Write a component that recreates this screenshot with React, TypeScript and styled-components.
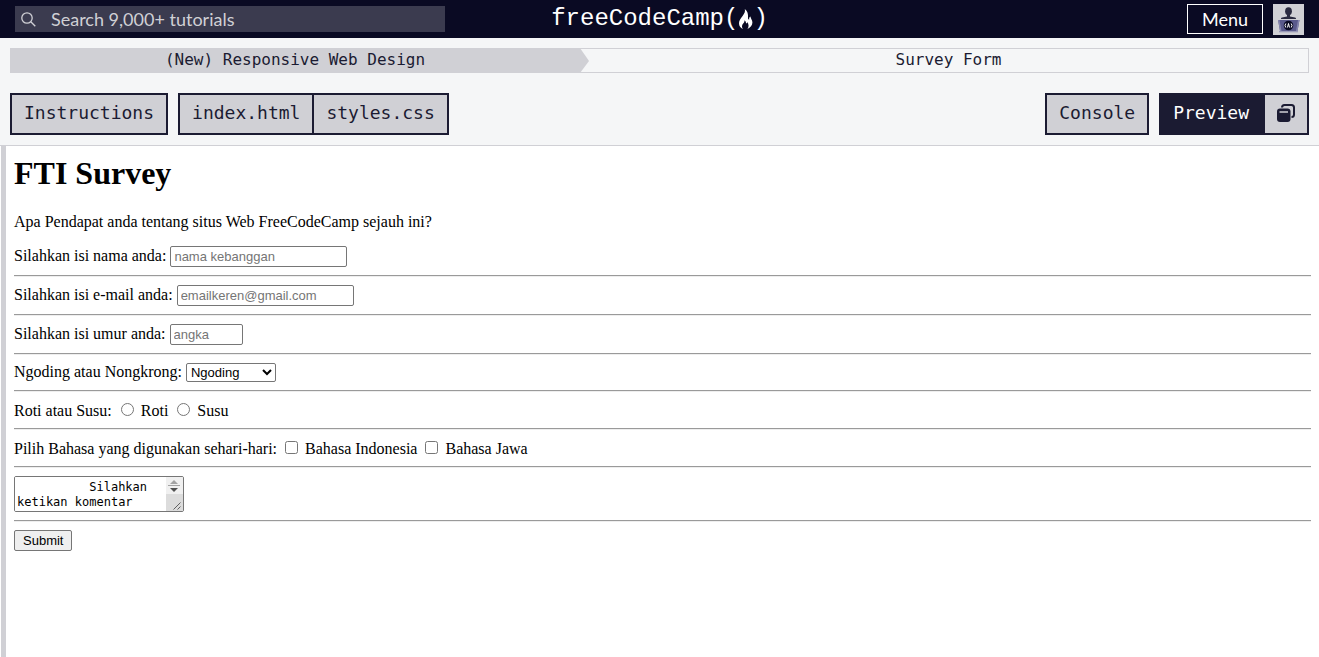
import React from 'react';
import styled, { createGlobalStyle } from 'styled-components';

const mono = "'DejaVu Sans Mono', monospace";
const sans = "Lato, sans-serif";
const arial = "'Liberation Sans', Arial, sans-serif";
const serif = "'Liberation Serif', 'Times New Roman', serif";

const GlobalStyle = createGlobalStyle`
  *, *::before, *::after { box-sizing: border-box; }
  html, body, #root { height: 100%; }
  body { margin: 0; background: #fff; }
`;

const Page = styled.div`
  min-height: 100%;
  display: flex;
  flex-direction: column;
`;

const Header = styled.header`
  display: grid;
  grid-template-columns: 1fr auto 1fr;
  align-items: center;
  height: 38px;
  padding: 0 15px;
  background: #0a0a23;
`;

const SearchBox = styled.label`
  display: flex;
  align-items: center;
  gap: 15px;
  width: 100%;
  max-width: 430px;
  height: 26px;
  padding: 0 6px;
  background: #3b3b4f;
  color: #d0d0d5;
`;

const SearchInput = styled.input`
  flex: 1;
  min-width: 0;
  padding: 0;
  border: 0;
  outline: 0;
  background: transparent;
  color: #d0d0d5;
  font: 18px/24px ${sans};
  &::placeholder { color: #d0d0d5; opacity: 1; }
`;

const Logo = styled.a`
  display: flex;
  align-items: center;
  color: #fff;
  font: 24px/34px 'Liberation Mono', monospace;
  text-decoration: none;
`;

const HeaderActions = styled.div`
  display: flex;
  align-items: center;
  justify-content: flex-end;
  gap: 10px;
`;

const MenuButton = styled.button`
  height: 30px;
  padding: 0 14px;
  border: 1px solid #fff;
  background: #0a0a23;
  color: #fff;
  font: 18px/24px ${sans};
`;

const AvatarLink = styled.a`
  display: block;
  width: 31px;
  height: 31px;
  background: #d0d0d5;
`;

const Toolbar = styled.div`
  padding: 10px;
  border-bottom: 1px solid #d0d0d5;
  background: #f5f6f7;
`;

const Breadcrumb = styled.nav`
  display: grid;
  grid-template-columns: 19fr 9px 24fr;
  height: 25px;
  margin-bottom: 20px;
  font: 16px/23px ${mono};
  text-align: center;
`;

const Crumb = styled.a<{ $filled?: boolean }>`
  color: #1b1b32;
  text-decoration: none;
  background: ${(p) => (p.$filled ? '#d0d0d5' : 'transparent')};
  border: 1px solid #d0d0d5;
  border-width: ${(p) => (p.$filled ? '0' : '1px 1px 1px 0')};
  line-height: ${(p) => (p.$filled ? '23px' : '21px')};
`;

const CrumbArrow = styled.svg`
  display: block;
  width: 9px;
  height: 25px;
`;

const TabBar = styled.div`
  display: flex;
  justify-content: space-between;
`;

const TabSide = styled.div`
  display: flex;
  gap: 10px;
`;

const TabGroup = styled.div`
  display: flex;
`;

const Tab = styled.button<{ $active?: boolean; $icon?: boolean; $joined?: boolean }>`
  display: flex;
  align-items: center;
  justify-content: center;
  height: 42px;
  margin: 0;
  padding: ${(p) => (p.$icon ? '0 11px 2px' : '0 12px 3px')};
  border: 2px solid #1b1b32;
  border-left-width: ${(p) => (p.$joined ? '0' : '2px')};
  background: ${(p) => (p.$active ? '#1b1b32' : '#d0d0d5')};
  color: ${(p) => (p.$active ? '#fff' : '#1b1b32')};
  font: 18px/24px ${mono};
`;

const Preview = styled.main`
  flex: 1;
  margin-left: 1px;
  padding: 9px 8px 8px;
  border-left: 5px solid #d0d0d5;
  background: #fff;
  color: #000;
  font: 16px/18px ${serif};
`;

const Title = styled.h1`
  margin: 0 0 21px;
  font-size: 32px;
  line-height: 37px;
`;

const Intro = styled.p`
  margin: 0 0 15px;
`;

const Row = styled.div``;

const Rule = styled.hr`
  height: 2px;
  margin: 8px 0;
  border: solid;
  border-width: 1px 0;
  border-color: #9a9a9a #eee #eee #9a9a9a;
`;

const Field = styled.input<{ $short?: boolean }>`
  width: ${(p) => (p.$short ? '73px' : '177px')};
  height: 21px;
  padding: 1px 3px;
  border: 1px solid #767676;
  border-radius: 2px;
  background: #fff;
  font: 13px/15px ${arial};
  &::placeholder { color: #757575; opacity: 1; }
`;

const Choice = styled.select`
  width: 90px;
  height: 19px;
  padding: 0;
  border: 1px solid #767676;
  border-radius: 2px;
  background: #fff;
  color: #000;
  font: 13px/15px ${arial};
`;

const Tick = styled.input`
  width: 13px;
  height: 13px;
`;

const CommentBox = styled.div`
  display: flex;
  width: 170px;
  height: 36px;
  border: 1px solid #767676;
  border-radius: 2px;
  overflow: hidden;
`;

const Comment = styled.textarea`
  flex: 1;
  min-width: 0;
  padding: 3px 2px 1px;
  border: 0;
  outline: 0;
  resize: none;
  overflow: hidden;
  color: #000;
  font: 12px/15px ${mono};
`;

const ScrollTrack = styled.svg`
  flex: none;
  width: 17px;
  height: 34px;
`;

const Submit = styled.button`
  display: block;
  height: 21px;
  padding: 0 8px;
  border: 1px solid #767676;
  border-radius: 2px;
  background: #efefef;
  color: #000;
  font: 13px/15px ${arial};
`;

const SearchIcon = () => (
  <svg width="15" height="15" viewBox="0 0 15 15" fill="none" stroke="currentColor" strokeWidth="1.3" aria-hidden="true">
    <circle cx="6" cy="6" r="5.200" />
    <path d="M9.800 9.800 14.300 14.300" />
  </svg>
);

const Flame = () => (
  <svg width="15" height="22" viewBox="0 0 15 22" aria-hidden="true">
    <path
      fill="#fff"
      d="M6.800 1C7.400 3.600 6.600 5.300 4.600 7.900C2.800 10.200 1 12.200 1 15.200C1 17.900 2.500 19.900 4.900 21C3.600 19 3.700 17.200 5.200 15.500C6.300 14.300 6.600 13.400 6.400 12.200C7.700 12.900 8.200 14.200 8 15.600C8.800 15.400 9.200 14.700 9.200 14C10.900 16.300 11.100 19 9.400 21C12.400 19.800 14.400 17.500 14.400 14.600C14.400 12.200 12.800 10.900 12.400 8.600C11.300 9.400 11 10.300 11.200 11.600C10.300 11.600 9.900 10.900 10 9.800C10.300 6.300 9.600 3 6.800 1Z"
    />
  </svg>
);

const AvatarIcon = () => (
  <svg width="31" height="31" viewBox="0 0 31 31" aria-hidden="true">
    <ellipse cx="15.500" cy="7.200" rx="3.400" ry="4" fill="#2a2a40" />
    <path fill="#2a2a40" d="M14 10h3v2.500l5 1c.9.300 1 .8 1 1.500H8c0-.7.1-1.200 1-1.500l5-1Z" />
    <path fill="#5a5a8c" d="M5 16h21.500l-2 11H7Z" />
    <path fill="#8686ae" d="M5 16h1.500l2 11H7Zm21.500 0H25l-2 11h1.500ZM6 27.300h19v1H6Z" />
    <circle cx="15.500" cy="21.500" r="4.800" fill="#0a0a23" />
    <path fill="none" stroke="#fff" strokeWidth="1" d="M12.800 19.500q-1.600 2 0 4m5.400-4q1.600 2 0 4m-3.700 0 1-4 1 4" />
  </svg>
);

const WindowsIcon = () => (
  <svg width="20" height="20" viewBox="0 0 20 20" aria-hidden="true">
    <path fill="none" stroke="#1b1b32" strokeWidth="2" d="M6 4.500Q6 2 8.500 2H15.500Q18 2 18 4.500V11.500Q18 14 15.500 14" />
    <rect x="1" y="5.500" width="13.500" height="13.500" rx="3" fill="#1b1b32" />
    <path stroke="#d0d0d5" strokeWidth="1.500" d="M3.500 9h8.500" />
  </svg>
);

export default function App() {
  return (
    <Page>
      <GlobalStyle />
      <Header>
        <SearchBox>
          <SearchIcon />
          <SearchInput type="text" aria-label="Search" placeholder="Search 9,000+ tutorials" />
        </SearchBox>
        <Logo href="#">freeCodeCamp(<Flame />)</Logo>
        <HeaderActions>
          <MenuButton type="button">Menu</MenuButton>
          <AvatarLink href="#" aria-label="Profile"><AvatarIcon /></AvatarLink>
        </HeaderActions>
      </Header>

      <Toolbar>
        <Breadcrumb>
          <Crumb href="#" $filled>(New) Responsive Web Design</Crumb>
          <CrumbArrow viewBox="0 0 9 25" aria-hidden="true">
            <path fill="none" stroke="#d0d0d5" d="M0 .5h9M0 24.500h9" />
            <path fill="#d0d0d5" d="M0 0l9 13-9 12Z" />
          </CrumbArrow>
          <Crumb href="#">Survey Form</Crumb>
        </Breadcrumb>
        <TabBar>
          <TabSide>
            <Tab type="button">Instructions</Tab>
            <TabGroup>
              <Tab type="button">index.html</Tab>
              <Tab type="button" $joined>styles.css</Tab>
            </TabGroup>
          </TabSide>
          <TabSide>
            <Tab type="button">Console</Tab>
            <TabGroup>
              <Tab type="button" $active>Preview</Tab>
              <Tab type="button" $icon aria-label="Open preview in a new window"><WindowsIcon /></Tab>
            </TabGroup>
          </TabSide>
        </TabBar>
      </Toolbar>

      <Preview>
        <Title>FTI Survey</Title>
        <Intro>Apa Pendapat anda tentang situs Web FreeCodeCamp sejauh ini?</Intro>
        <form>
          <Row>
            <label htmlFor="name">Silahkan isi nama anda:</label>{' '}
            <Field id="name" type="text" placeholder="nama kebanggan" />
          </Row>
          <Rule />
          <Row>
            <label htmlFor="email">Silahkan isi e-mail anda:</label>{' '}
            <Field id="email" type="email" placeholder="emailkeren@gmail.com" />
          </Row>
          <Rule />
          <Row>
            <label htmlFor="age">Silahkan isi umur anda:</label>{' '}
            <Field id="age" type="number" placeholder="angka" $short />
          </Row>
          <Rule />
          <Row>
            <label htmlFor="activity">Ngoding atau Nongkrong:</label>{' '}
            <Choice id="activity">
              <option>Ngoding</option>
              <option>Nongkrong</option>
            </Choice>
          </Row>
          <Rule />
          <Row role="radiogroup" aria-labelledby="food">
            <span id="food">Roti atau Susu:</span>{' '}
            <label><Tick type="radio" name="food" /> Roti</label>{' '}
            <label><Tick type="radio" name="food" /> Susu</label>
          </Row>
          <Rule />
          <Row role="group" aria-labelledby="language">
            <span id="language">Pilih Bahasa yang digunakan sehari-hari:</span>{' '}
            <label><Tick type="checkbox" /> Bahasa Indonesia</label>{' '}
            <label><Tick type="checkbox" /> Bahasa Jawa</label>
          </Row>
          <Rule />
          <CommentBox>
            <Comment aria-label="Komentar" defaultValue={'          Silahkan ketikan komentar'} />
            <ScrollTrack viewBox="0 0 17 34" aria-hidden="true">
              <path fill="#f0f0f0" d="M0 0h17v17H0Z" />
              <path fill="#dcdcdc" d="M0 17h17v17H0Z" />
              <path fill="#a3a3a3" d="M4 7l4-4 4 4ZM2 8h12v1H2Z" />
              <path fill="#505050" d="M4 11h8l-4 4Z" />
              <path stroke="#606060" d="M7.500 32.500l7-7m-3 7l3-3" />
            </ScrollTrack>
          </CommentBox>
          <Rule />
          <Submit type="submit">Submit</Submit>
        </form>
      </Preview>
    </Page>
  );
}
